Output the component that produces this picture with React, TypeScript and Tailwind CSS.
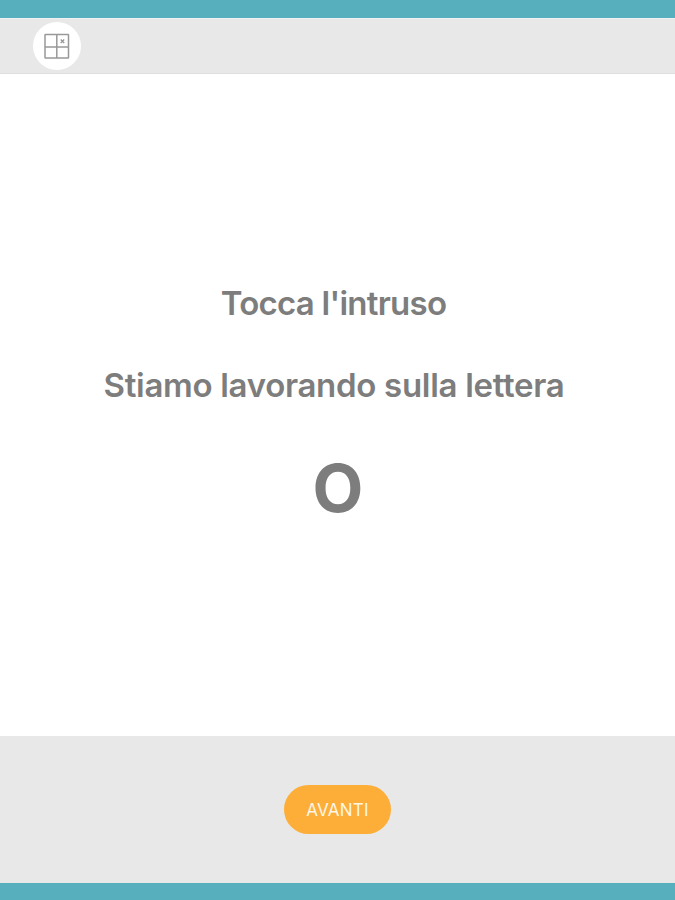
import React from 'react'

const GridIcon = () => (
    <svg width="26" height="26" viewBox="0 0 26 26" fill="none" stroke="#999999" strokeWidth="1.5" aria-hidden>
        <rect x="1" y="1.5" width="23.5" height="23.5" rx="0.5" />
        <path d="M12.8 1.5v23.5M1 14h23.5" />
        <path d="M16.7 6.5l3.5 3.5M20.2 6.5l-3.5 3.5" strokeWidth="1.4" />
    </svg>
)

export default function App() {
    return (
        <div className="flex h-[900px] w-[675px] flex-col overflow-hidden border-t-[18px] border-b-[17px] border-[#57afbe] bg-white font-['Inter',sans-serif]">
            <header className="flex h-14 shrink-0 items-center border-t border-b border-t-[#f0f2f2] border-b-[#dfdfdf] bg-[#e8e8e8] pl-[33px]">
                <button aria-label="Menu" className="flex size-12 items-center justify-center rounded-full bg-white">
                    <GridIcon />
                </button>
            </header>

            <main className="flex flex-1 flex-col items-center pt-[209px] font-bold text-[#7d7d7d]">
                <h1 className="mr-[8px] text-[33px] leading-10 font-semibold tracking-[-0.75px] whitespace-nowrap">
                    Tocca l'intruso
                </h1>
                <h2 className="mt-[42px] mr-[7px] text-[33px] leading-10 font-semibold tracking-[-0.3px] whitespace-nowrap">
                    Stiamo lavorando sulla lettera
                </h2>
                <p className="mt-[43px] ml-px text-[66px] leading-[80px]">O</p>
            </main>

            <footer className="flex h-[147px] shrink-0 items-center justify-center bg-[#e8e8e8]">
                <button className="h-[49px] w-[107px] rounded-full bg-[#fdae38] pt-[2px] text-[17px] tracking-[0.2px] text-[#fff6e6]">
                    AVANTI
                </button>
            </footer>
        </div>
    )
}
